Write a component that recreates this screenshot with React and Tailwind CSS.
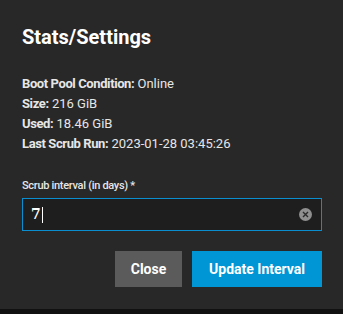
import React from 'react'

const StatsSettings = () => {
    const interval = '7';

    return (
      <div className="w-[343px] h-[314px] bg-[#111111] font-['Roboto',sans-serif]">
        <div className="h-[309px] bg-[#282828] pl-[22px] pr-[21px] pt-[25px]">
          <h1 className="text-[20px] leading-[24px] font-bold text-white">Stats/Settings</h1>

          {/* ------ STATS ------ */}
          <div className="mt-[25px] text-[13px] leading-[20px] text-[#e6e6e6]">
            <div><span className="font-bold tracking-[-0.4px]">Boot Pool Condition:</span> Online</div>
            <div><span className="font-bold tracking-[-0.4px]">Size:</span> 216 GiB</div>
            <div><span className="font-bold tracking-[-0.4px]">Used:</span> 18.46 GiB</div>
            <div><span className="font-bold tracking-[-0.4px]">Last Scrub Run:</span> 2023-01-28 03:45:26</div>
          </div>

          {/* ------ FORM ------ */}
          <label className="block mt-[25px] text-[11px] leading-[14px] font-medium text-[#e6e6e6] tracking-[-0.3px]">
            Scrub interval (in days) *
          </label>
          <div className="mt-[5px] h-[33px] flex items-center border border-[#0b8ed0] bg-[#1e1e1e] pl-[8px] pr-[9px]">
            <div className="flex-1 flex items-center">
              <span className="text-[14px] font-['DejaVu_Serif','Liberation_Serif',serif] font-bold text-white">{interval}</span>
              <span className="ml-[1px] w-[1px] h-[16px] bg-white"></span>
            </div>
            <span className="w-[13px] h-[13px] rounded-full bg-[#8f8f8f] flex items-center justify-center">
              <svg width="7" height="7" viewBox="0 0 7 7">
                <path d="M1 1L6 6M6 1L1 6" stroke="#2a2a2a" strokeWidth="1.4" />
              </svg>
            </span>
          </div>

          {/* ------ ACTIONS ------ */}
          <div className="mt-[20px] flex justify-end gap-[10px]">
            <button className="h-[36px] w-[67px] bg-[#5b5b5b] text-white text-[14px] font-bold">Close</button>
            <button className="h-[36px] w-[130px] bg-[#0095d5] text-white text-[14px] font-bold">Update Interval</button>
          </div>
        </div>
      </div>
    );
}

export default StatsSettings;
